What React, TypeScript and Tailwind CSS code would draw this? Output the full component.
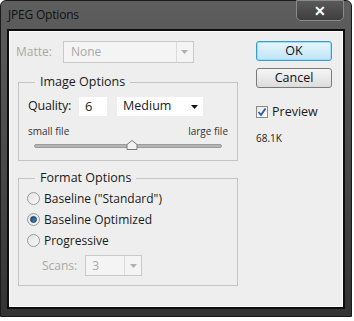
import React from "react";

const font = { fontFamily: '"Open Sans", "Noto Sans", sans-serif' };

function Radio({ checked, label }: { checked?: boolean; label: string }) {
  return (
    <div className="flex items-center h-[21px]">
      <div className="w-[13px] h-[13px] rounded-full border border-[#9a9a9a] bg-gradient-to-br from-[#e4e4e4] to-[#f8f8f8] flex items-center justify-center">
        {checked && <div className="w-[7px] h-[7px] rounded-full bg-gradient-to-br from-[#1a4e7a] to-[#3f8bc6] border border-[#163a5a]" />}
      </div>
      <span className="ml-[4px] text-[12px] text-[#1a1a1a]">{label}</span>
    </div>
  );
}

function Arrow({ color }: { color: string }) {
  return (
    <svg width="7" height="4" viewBox="0 0 7 4">
      <polygon points="0,0 7,0 3.5,4" fill={color} />
    </svg>
  );
}

export default function App() {
  return (
    <div className="w-[354px] h-[321px] bg-white" style={font}>
      <div className="w-[352px] h-[317px] rounded-t-[6px] bg-gradient-to-b from-[#5e5e5e] via-[#4a4a4a] to-[#333] border border-[#1a1a1a] flex flex-col relative">
        {/* title bar */}
        <div className="h-[28px] flex items-center pl-[7px]">
          <span className="text-[12px] text-[#111] tracking-[-0.2px]">JPEG Options</span>
        </div>
        <div className="absolute top-[-1px] right-[7px] w-[48px] h-[21px] rounded-b-[5px] border border-[#8a8a8a] bg-gradient-to-b from-[#5a5a5a] to-[#3e3e3e] flex items-center justify-center">
          <span className="text-white text-[14px] font-bold leading-none">✕</span>
        </div>
        {/* content */}
        <div className="mx-[6px] border-2 border-[#0d0d0d] h-[280px]">
          <div className="h-full border border-[#fdfdfd] bg-[#eeeeee] flex">
            {/* left column */}
            <div className="w-[237px] flex flex-col">
              <div className="flex items-center mt-[9px] h-[22px]">
                <span className="ml-[6px] text-[12px] text-[#a8a8a8]">Matte:</span>
                <div className="ml-[11px] w-[131px] h-[22px] border border-[#c9c9c9] bg-[#f4f4f4] flex items-center">
                  <span className="ml-[7px] text-[12px] text-[#a8a8a8] flex-1">None</span>
                  <div className="w-[17px] h-full border-l border-[#dcdcdc] flex items-center justify-center">
                    <Arrow color="#b0b0b0" />
                  </div>
                </div>
              </div>
              {/* Image Options */}
              <div className="relative ml-[8px] mt-[19px] w-[220px] h-[79px] border border-[#c4c4c4]">
                <span className="absolute -top-[10px] left-[16px] px-[5px] bg-[#eeeeee] text-[12.5px] text-[#1a1a1a] leading-[18px]">Image Options</span>
                <div className="flex items-center mt-[14px] ml-[9px] h-[19px]">
                  <span className="text-[12.5px] text-[#1a1a1a] tracking-[-0.2px]">Quality:</span>
                  <div className="ml-[8px] w-[28px] h-[19px] bg-white flex items-center">
                    <span className="ml-[6px] text-[13px] text-[#1a1a1a]">6</span>
                  </div>
                  <div className="ml-[10px] w-[86px] h-[19px] bg-white flex items-center">
                    <span className="ml-[6px] text-[12.5px] text-[#1a1a1a] flex-1">Medium</span>
                    <div className="mr-[5px]"><Arrow color="#111" /></div>
                  </div>
                </div>
                <div className="flex justify-between mx-[9px] mt-[8px] h-[14px] items-center">
                  <span className="text-[10px] text-[#333]">small file</span>
                  <span className="text-[10px] text-[#333]">large file</span>
                </div>
                <div className="relative mx-[15px] mt-[4px] h-[8px]">
                  <div className="absolute left-0 right-0 top-[2px] h-[4px] rounded-full bg-[#b4b4b4] border border-[#9c9c9c]" />
                  <svg className="absolute top-[-2px] left-[92px]" width="12" height="10" viewBox="0 0 12 10">
                    <polygon points="1,9.5 1,4.5 6,0.5 11,4.5 11,9.5" fill="#f2f2f2" stroke="#7a7a7a" strokeWidth="1" />
                  </svg>
                </div>
              </div>
              {/* Format Options */}
              <div className="relative ml-[8px] mt-[17px] w-[220px] h-[108px] border border-[#c4c4c4]">
                <span className="absolute -top-[10px] left-[16px] px-[5px] bg-[#eeeeee] text-[12.5px] text-[#1a1a1a] leading-[18px]">Format Options</span>
                <div className="mt-[9px] ml-[8px] flex flex-col">
                  <Radio label={'Baseline ("Standard")'} />
                  <Radio checked label="Baseline Optimized" />
                  <Radio label="Progressive" />
                  <div className="flex items-center mt-[4px] h-[21px]">
                    <span className="ml-[15px] text-[12px] text-[#a8a8a8]">Scans:</span>
                    <div className="ml-[8px] w-[57px] h-[21px] border border-[#c9c9c9] bg-[#f4f4f4] flex items-center">
                      <span className="ml-[6px] text-[12px] text-[#a8a8a8] flex-1">3</span>
                      <div className="w-[17px] h-full border-l border-[#dcdcdc] flex items-center justify-center">
                        <Arrow color="#b0b0b0" />
                      </div>
                    </div>
                  </div>
                </div>
              </div>
            </div>
            {/* right column */}
            <div className="ml-[9px] flex flex-col">
              <div className="mt-[9px] w-[76px] h-[20px] rounded-[3px] border border-[#3c9bd0] bg-gradient-to-b from-[#e6f5fc] to-[#bfe5f7] shadow-[inset_0_0_0_1px_#9fdcf7] flex items-center justify-center">
                <span className="text-[12.5px] text-[#111]">OK</span>
              </div>
              <div className="mt-[7px] w-[76px] h-[20px] rounded-[3px] border border-[#7a7a7a] bg-gradient-to-b from-[#f6f6f6] to-[#dcdcdc] flex items-center justify-center">
                <span className="text-[12.5px] text-[#111]">Cancel</span>
              </div>
              <div className="flex items-center mt-[15px]">
                <div className="w-[12px] h-[12px] border border-[#8a8a8a] bg-gradient-to-br from-[#e8e8e8] to-white flex items-center justify-center">
                  <svg width="10" height="10" viewBox="0 0 10 10">
                    <path d="M1.5 5 L4 8 L8.5 1.5" fill="none" stroke="#2a5aa8" strokeWidth="1.8" />
                  </svg>
                </div>
                <span className="ml-[4px] text-[12.5px] text-[#1a1a1a]">Preview</span>
              </div>
              <span className="mt-[9px] text-[10px] text-[#222]">68.1K</span>
            </div>
          </div>
        </div>
      </div>
    </div>
  );
}
